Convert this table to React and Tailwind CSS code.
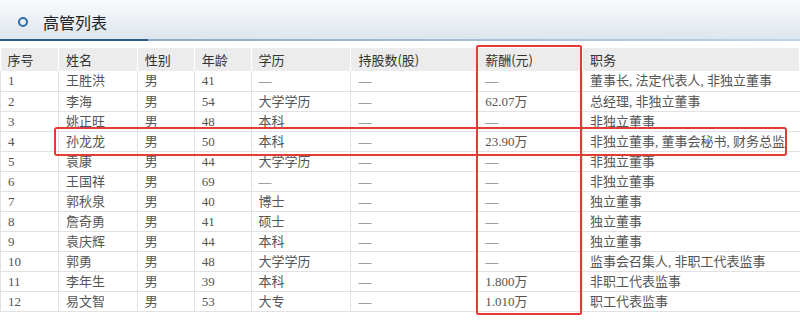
const COLS = [58, 79, 57, 57, 100, 127, 105, 217];
const HEADERS = ["序号", "姓名", "性别", "年龄", "学历", "持股数(股)", "薪酬(元)", "职务"];

const ROWS = [
  ["1", "王胜洪", "男", "41", "—", "—", "—", "董事长, 法定代表人, 非独立董事"],
  ["2", "李海", "男", "54", "大学学历", "—", "62.07万", "总经理, 非独立董事"],
  ["3", "姚正旺", "男", "48", "本科", "—", "—", "非独立董事"],
  ["4", "孙龙龙", "男", "50", "本科", "—", "23.90万", "非独立董事, 董事会秘书, 财务总监"],
  ["5", "袁康", "男", "44", "大学学历", "—", "—", "非独立董事"],
  ["6", "王国祥", "男", "69", "—", "—", "—", "非独立董事"],
  ["7", "郭秋泉", "男", "40", "博士", "—", "—", "独立董事"],
  ["8", "詹奇勇", "男", "41", "硕士", "—", "—", "独立董事"],
  ["9", "袁庆辉", "男", "44", "本科", "—", "—", "独立董事"],
  ["10", "郭勇", "男", "48", "大学学历", "—", "—", "监事会召集人, 非职工代表监事"],
  ["11", "李年生", "男", "39", "本科", "—", "1.800万", "非职工代表监事"],
  ["12", "易文智", "男", "53", "大专", "—", "1.010万", "职工代表监事"],
];

export default function App() {
  return (
    <div className="relative w-[800px] h-[323px] overflow-hidden bg-white">
      {/* title band */}
      <div className="flex h-[39px] items-center gap-[15px] bg-gradient-to-b from-[#fafbfd] to-[#dde5ee] pl-[18px] pt-[4px]">
        <span className="block h-[10px] w-[10px] rounded-full border-2 border-[#2f6ea6]" />
        <span className="text-[16px] text-[#222] font-['Noto_Sans_CJK_SC',sans-serif]">
          高管列表
        </span>
      </div>
      <div className="flex h-[2px]">
        <div className="w-[148px] bg-[#2d5c88]" />
        <div className="flex-1 bg-gradient-to-r from-[#8eaac4] to-[#c3d3e1]" />
      </div>

      <table className="mt-[7px] table-fixed border-collapse text-[13px]">
        <colgroup>
          {COLS.map((w, i) => (
            <col key={i} style={{ width: w }} />
          ))}
        </colgroup>
        <thead>
          <tr className="h-[23px] bg-[#ececec]">
            {HEADERS.map((h, i) => (
              <th
                key={i}
                className="border-r border-white px-[7px] text-left font-normal text-[#333] font-['Noto_Sans_CJK_SC',sans-serif] leading-none"
              >
                {h}
              </th>
            ))}
          </tr>
        </thead>
        <tbody>
          {ROWS.map((r, ri) => (
            <tr key={ri} className="h-[20px] border-b border-[#e2e2e2]">
              {r.map((c, ci) => (
                <td
                  key={ci}
                  className={
                    "overflow-hidden whitespace-nowrap border-r border-[#e2e2e2] px-[7px] text-[#555] leading-none font-['Liberation_Serif','Noto_Sans_CJK_SC',serif]" +
                    (ci === 0 ? " border-l" : "") +
                    (ci === 7 ? " border-r-0" : "")
                  }
                >
                  {c}
                </td>
              ))}
            </tr>
          ))}
        </tbody>
      </table>

      {/* red highlight boxes */}
      <div className="pointer-events-none absolute left-[476px] top-[45px] h-[270px] w-[106px] rounded-[2px] border-2 border-[#e53a36]" />
      <div className="pointer-events-none absolute left-[54px] top-[127px] h-[29px] w-[733px] rounded-[3px] border-2 border-[#e53a36]" />
    </div>
  );
}
